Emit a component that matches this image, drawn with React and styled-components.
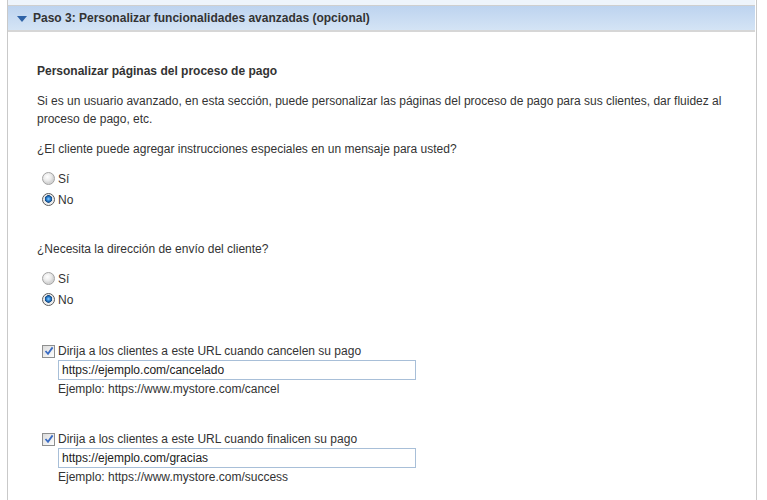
import React from "react";
import styled, { createGlobalStyle } from "styled-components";

const Global = createGlobalStyle`
  html, body { margin: 0; padding: 0; background: #fff; }
  body { font-family: "Liberation Sans", Arial, sans-serif; font-size: 12px; color: #333; }
`;

const Frame = styled.div`
  margin-left: 7px;
  width: 748px;
  border-left: 1px solid #c9c9c9;
  border-right: 1px solid #c9c9c9;
  min-height: 500px;
  box-sizing: content-box;
`;

const TopStrip = styled.div`
  height: 5px;
  background: #eef4fb;
  border-bottom: 1px solid #cfcfcf;
  margin-right: 1px;
`;

const Header = styled.div`
  height: 24px;
  margin-right: 1px;
  background: linear-gradient(#bdd3ef, #d4e4f5);
  border-bottom: 2px solid #d6d6d6;
  display: flex;
  align-items: center;
  padding-left: 9px;
  gap: 6px;
  font-weight: bold;
  color: #333;
  font-size: 12px;
`;

const Triangle = styled.span`
  width: 0;
  height: 0;
  border-left: 5px solid transparent;
  border-right: 5px solid transparent;
  border-top: 6px solid #2e62a6;
  margin-top: 1px;
`;

const Body = styled.div`
  padding: 30px 0 0 29px;
`;

const Title = styled.div`
  font-weight: bold;
  line-height: 18px;
  margin-bottom: 12px;
`;

const Para = styled.p`
  margin: 0 0 12px 0;
  line-height: 18px;
  padding-right: 30px;
`;

const Question = styled.p`
  margin: ${(p) => (p.$top ? `${p.$top}px` : "0")} 0 10px 0;
  line-height: 18px;
`;

const OptionList = styled.div`
  display: flex;
  flex-direction: column;
  padding-left: 5px;
`;

const Option = styled.label`
  display: flex;
  align-items: center;
  height: 21px;
  gap: 3px;
`;

const Radio = styled.span`
  width: 11px;
  height: 11px;
  border-radius: 50%;
  border: 1px solid ${(p) => (p.$checked ? "#5a5a5a" : "#a3a3a3")};
  background: ${(p) =>
    p.$checked
      ? "radial-gradient(circle at 50% 45%, #8fd0ff 0, #2a7fd0 2px, #14477f 3.5px, #e6e6e6 4px, #f4f4f4 6px)"
      : "radial-gradient(circle at 40% 35%, #ffffff 0, #eaeaea 4px, #d5d5d5 6px)"};
  box-sizing: content-box;
  flex: none;
`;

const CheckGroup = styled.div`
  margin-top: ${(p) => p.$top}px;
  padding-left: 5px;
`;

const CheckRow = styled.label`
  display: flex;
  align-items: center;
  height: 18px;
  gap: 3px;
`;

const Box = styled.span`
  width: 11px;
  height: 11px;
  border: 1px solid #8e8f8f;
  background: linear-gradient(135deg, #dcdcdc, #fdfdfd);
  display: flex;
  align-items: center;
  justify-content: center;
  flex: none;
`;

const Indented = styled.div`
  padding-left: 16px;
`;

const UrlInput = styled.div`
  width: 353px;
  height: 18px;
  border: 1px solid #a8bfd8;
  padding-left: 3px;
  line-height: 18px;
  color: #222;
  font-size: 12px;
`;

const Hint = styled.div`
  line-height: 18px;
  color: #333;
`;

const Check = () => (
  <Box>
    <svg width="10" height="10" viewBox="0 0 10 10">
      <path d="M1.5 5 L4 7.8 L8.6 1.4" fill="none" stroke="#3a6cc4" strokeWidth="1.8" />
    </svg>
  </Box>
);

const RadioGroup = ({ value }) => (
  <OptionList>
    <Option>
      <Radio $checked={value === "si"} />
      Sí
    </Option>
    <Option>
      <Radio $checked={value === "no"} />
      No
    </Option>
  </OptionList>
);

const UrlBlock = ({ top, label, value, hint }) => (
  <CheckGroup $top={top}>
    <CheckRow>
      <Check />
      {label}
    </CheckRow>
    <Indented>
      <UrlInput>{value}</UrlInput>
      <Hint>{hint}</Hint>
    </Indented>
  </CheckGroup>
);

export default function App() {
  return (
    <>
      <Global />
      <Frame>
        <TopStrip />
        <Header>
          <Triangle />
          Paso 3: Personalizar funcionalidades avanzadas (opcional)
        </Header>
        <Body>
          <Title>Personalizar páginas del proceso de pago</Title>
          <Para>
            Si es un usuario avanzado, en esta sección, puede personalizar las páginas del proceso de pago para sus clientes, dar fluidez al proceso de pago, etc.
          </Para>
          <Question>¿El cliente puede agregar instrucciones especiales en un mensaje para usted?</Question>
          <RadioGroup value="no" />
          <Question $top={30}>¿Necesita la dirección de envío del cliente?</Question>
          <RadioGroup value="no" />
          <UrlBlock
            top={32}
            label="Dirija a los clientes a este URL cuando cancelen su pago"
            value="https://ejemplo.com/cancelado"
            hint="Ejemplo: https://www.mystore.com/cancel"
          />
          <UrlBlock
            top={32}
            label="Dirija a los clientes a este URL cuando finalicen su pago"
            value="https://ejemplo.com/gracias"
            hint="Ejemplo: https://www.mystore.com/success"
          />
        </Body>
      </Frame>
    </>
  );
}
